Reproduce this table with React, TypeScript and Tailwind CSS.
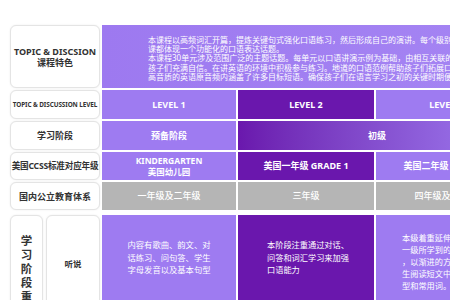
import React from 'react';

const light = 'bg-[#9e7bf1]';
const dark = 'bg-[#6a17ad]';
const gray = 'bg-[#b5b5b5]';

function Label({ children, className = 'leading-[11px]' }: { children: React.ReactNode; className?: string }) {
  return (
    <div
      className={`bg-white rounded-[6px] border border-[#e4e4e4] shadow-[0_0_2px_rgba(0,0,0,0.08)] flex flex-col items-center text-center font-bold text-[#333] ${className}`}
    >
      {children}
    </div>
  );
}

function Cell({ bg, children, className = '' }: { bg: string; children: React.ReactNode; className?: string }) {
  return <div className={`${bg} text-white flex flex-col ${className}`}>{children}</div>;
}

export default function App() {
  return (
    <div className="w-[450px] h-[300px] overflow-hidden bg-white font-['Noto_Sans','Noto_Sans_CJK_SC',sans-serif]">
      <div className="pt-[25px] pl-[10px] grid grid-cols-[90px_134px_136px_140px] grid-rows-[63px_29px_29px_28px_28px_100px] gap-[2px] w-[520px]">
        {/* Row 1: course features */}
        <Label className="justify-center text-[9px] leading-[11px]">
          <span>TOPIC &amp; DISCSION</span>
          <span>课程特色</span>
        </Label>
        <div className="col-span-3 bg-gradient-to-r from-[#9d79f0] to-[#a585f3] text-white flex items-center pl-[46px] pt-[3px]">
          <div className="text-[8px] leading-[9.3px] whitespace-nowrap">
            <div>本课程以高频词汇开篇，提炼关键句式强化口语练习，然后形成自己的演讲。每个级别三十</div>
            <div>课都体现一个功能化的口语表达话题。</div>
            <div>本课程30单元涉及范围广泛的主题话题。每单元以口语讲演示例为基础，由相互关联的语句</div>
            <div>孩子们充满自信。在讲英语的环境中积极参与练习。地道的口语范例帮助孩子们拓展口语能</div>
            <div>高音质的英语原音频内涵盖了许多目标短语。确保孩子们在语言学习之初的关键时期便接受</div>
          </div>
        </div>

        {/* Row 2: levels */}
        <Label className="justify-center text-[6.4px] leading-[11px] tracking-[-0.1px]">TOPIC &amp; DISCUSSION LEVEL</Label>
        <Cell bg={light} className="items-center justify-center text-[9px] font-bold">LEVEL 1</Cell>
        <Cell bg={dark} className="items-center justify-center text-[9px] font-bold">LEVEL 2</Cell>
        <Cell bg={light} className="items-center justify-center text-[9px] font-bold">LEVEL 3</Cell>

        {/* Row 3: stage */}
        <Label className="justify-center text-[9px] leading-[11px]">学习阶段</Label>
        <Cell bg={light} className="items-center justify-center text-[9px] font-bold">预备阶段</Cell>
        <div className="col-span-2 bg-gradient-to-r from-[#6a17ad] to-[#a07df2] text-white flex items-center justify-center text-[9px] font-bold">
          初级
        </div>

        {/* Row 4: CCSS */}
        <Label className="justify-center text-[8.6px] leading-[11px] tracking-[-0.2px]">美国CCSS标准对应年级</Label>
        <Cell bg={light} className="items-center justify-center text-[8.5px] font-bold leading-[11px]">
          <span>KINDERGARTEN</span>
          <span>美国幼儿园</span>
        </Cell>
        <Cell bg={dark} className="items-center justify-center text-[9px] font-bold">美国一年级 GRADE 1</Cell>
        <Cell bg={light} className="items-center justify-center text-[9px] font-bold">美国二年级 GRADE 2</Cell>

        {/* Row 5: domestic grades */}
        <Label className="justify-center text-[9px] leading-[11px]">国内公立教育体系</Label>
        <Cell bg={gray} className="items-center justify-center text-[9px] font-medium">一年级及二年级</Cell>
        <Cell bg={gray} className="items-center justify-center text-[9px] font-medium">三年级</Cell>
        <Cell bg={gray} className="items-center justify-center text-[9px] font-medium">四年级及五年级</Cell>

        {/* Row 6: focus - listening & speaking */}
        <div className="flex gap-[3px] mt-[3px]">
          <Label className="w-[33px] h-[120px] justify-start pt-[18px] text-[11.5px] leading-[14px]">
            <span>学</span>
            <span>习</span>
            <span>阶</span>
            <span>段</span>
            <span>重</span>
            <span>点</span>
          </Label>
          <Label className="flex-1 justify-center text-[8.5px] leading-[11px]">听说</Label>
        </div>
        <Cell bg={light} className="mt-[3px] items-center text-center text-[8.3px] leading-[12.5px] pt-[24px]">
          <span>内容有歌曲、韵文、对</span>
          <span>话练习、问句答、学生</span>
          <span>字母发音以及基本句型</span>
        </Cell>
        <Cell bg={dark} className="mt-[3px] items-start text-[8.2px] leading-[12.5px] pt-[24px] pl-[29px]">
          <span>本阶段注重通过对话、</span>
          <span>问答和词汇学习来加强</span>
          <span>口语能力</span>
        </Cell>
        <Cell bg={light} className="mt-[3px] items-start text-[8.2px] leading-[12px] pt-[17px] pl-[26px]">
          <span>本级着重延伸第一级和第</span>
          <span>一级所学到的句型和词汇</span>
          <span>，以渐进的方式引导学</span>
          <span>生阅读短文中的重点句</span>
          <span>型和常用词。</span>
        </Cell>
      </div>
    </div>
  );
}
